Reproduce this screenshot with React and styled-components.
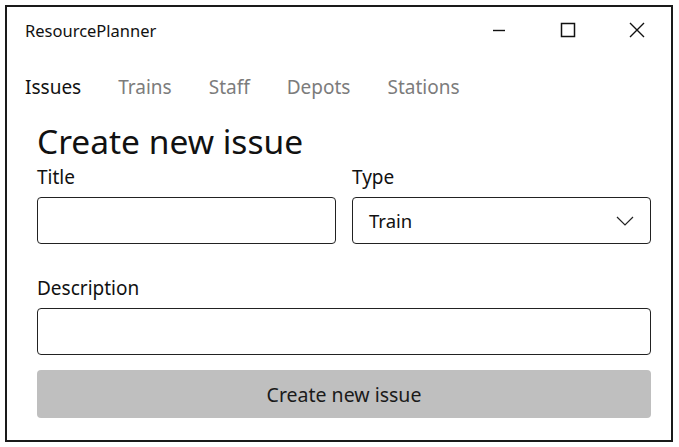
import React from 'react'
import styled, { createGlobalStyle } from 'styled-components'

const GlobalStyle = createGlobalStyle`
  body {
    margin: 0;
    background: #ffffff;
    font-family: "Noto Sans", "Open Sans", sans-serif;
  }
`

const Window = styled.div`
  box-sizing: border-box;
  margin: 5px 0 0 5px;
  width: 668px;
  height: 437px;
  border: 2px solid #1a1a1a;
  background: #ffffff;
  display: flex;
  flex-direction: column;
`

const TitleBar = styled.div`
  display: flex;
  align-items: center;
  height: 46px;
  padding-left: 18px;
`

const AppName = styled.div`
  flex: 1;
  font-size: 16.5px;
  color: #111;
`

const CaptionButton = styled.div`
  width: 69px;
  height: 46px;
  display: flex;
  align-items: center;
  justify-content: center;
`

const Tabs = styled.nav`
  display: flex;
  gap: 37px;
  padding: 14px 0 0 18px;
  height: 40px;
  align-items: center;
`

const Tab = styled.span`
  font-size: 19px;
  color: ${p => (p.$active ? '#111' : '#7c7c7c')};
`

const Form = styled.div`
  padding: 0 20px 0 30px;
  display: flex;
  flex-direction: column;
`

const Heading = styled.h1`
  margin: 14px 0 0;
  font-size: 33.5px;
  font-weight: 400;
  color: #111;
  line-height: 40px;
`

const Row = styled.div`
  display: grid;
  grid-template-columns: 1fr 1fr;
  gap: 16px;
  margin-top: 4px;
`

const Field = styled.div`
  display: flex;
  flex-direction: column;
  margin-top: ${p => p.$top || 0}px;
`

const Label = styled.label`
  font-size: 19px;
  color: #111;
  line-height: 24px;
  margin-bottom: 8px;
`

const Input = styled.div`
  box-sizing: border-box;
  height: 47px;
  border: 1.5px solid #222;
  border-radius: 4px;
  display: flex;
  align-items: center;
  padding: 0 16px 0 16px;
  font-size: 18.5px;
  color: #111;
`

const Value = styled.span`
  flex: 1;
`

const Button = styled.button`
  margin-top: 15px;
  height: 48px;
  border: none;
  border-radius: 4px;
  background: #bfbfbf;
  font-family: inherit;
  font-size: 19.5px;
  color: #1a1a1a;
`

export default function App() {
  return (
    <>
      <GlobalStyle />
      <Window>
        <TitleBar>
          <AppName>ResourcePlanner</AppName>
          <CaptionButton>
            <svg width="14" height="14" viewBox="0 0 14 14">
              <path d="M1 7.5h12" stroke="#111" strokeWidth="1.4" />
            </svg>
          </CaptionButton>
          <CaptionButton>
            <svg width="16" height="16" viewBox="0 0 16 16">
              <rect x="1.5" y="1.5" width="13" height="13" fill="none" stroke="#111" strokeWidth="1.5" />
            </svg>
          </CaptionButton>
          <CaptionButton>
            <svg width="16" height="16" viewBox="0 0 16 16">
              <path d="M1 1l14 14M15 1L1 15" stroke="#111" strokeWidth="1.4" />
            </svg>
          </CaptionButton>
        </TitleBar>
        <Tabs>
          <Tab $active>Issues</Tab>
          <Tab>Trains</Tab>
          <Tab>Staff</Tab>
          <Tab>Depots</Tab>
          <Tab>Stations</Tab>
        </Tabs>
        <Form>
          <Heading>Create new issue</Heading>
          <Row>
            <Field>
              <Label>Title</Label>
              <Input />
            </Field>
            <Field>
              <Label>Type</Label>
              <Input>
                <Value>Train</Value>
                <svg width="18" height="10" viewBox="0 0 18 10">
                  <path d="M1 1l8 8 8-8" fill="none" stroke="#222" strokeWidth="1.2" />
                </svg>
              </Input>
            </Field>
          </Row>
          <Field $top={32}>
            <Label>Description</Label>
            <Input />
          </Field>
          <Button>Create new issue</Button>
        </Form>
      </Window>
    </>
  )
}
